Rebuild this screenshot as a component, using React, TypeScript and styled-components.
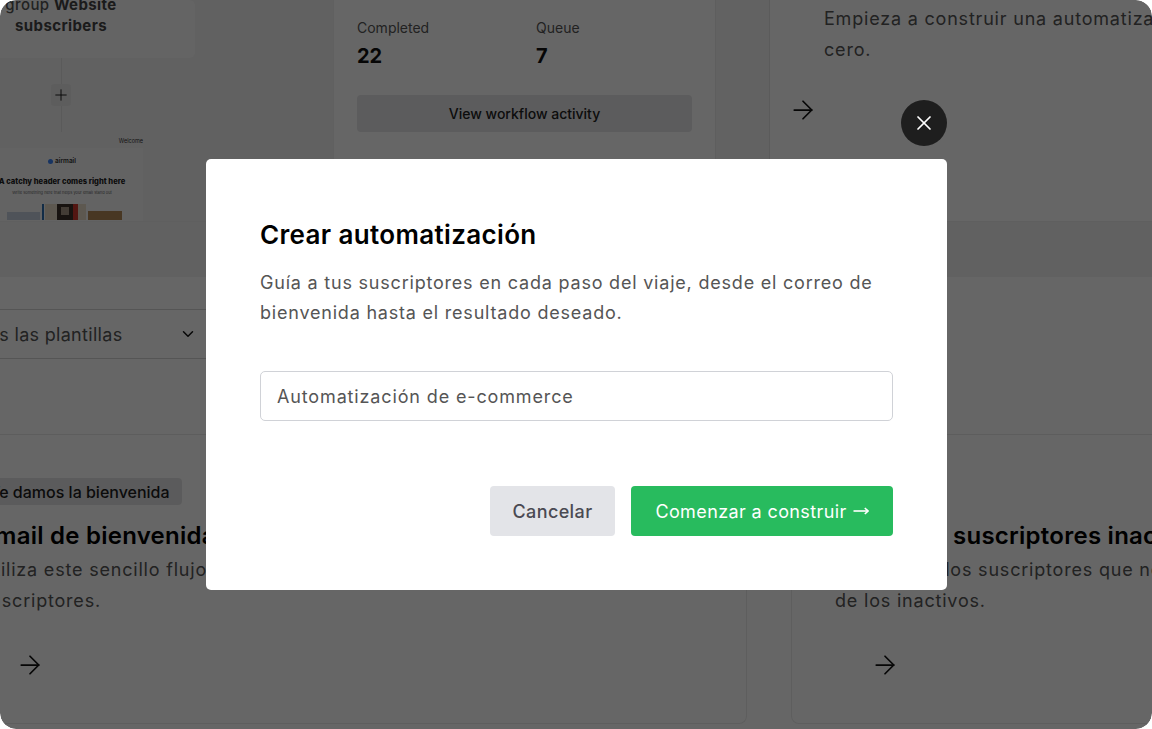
import React from "react";
import styled, { createGlobalStyle } from "styled-components";
import { ArrowRight, ChevronDown, Plus, X } from "lucide-react";

const Global = createGlobalStyle`
  html, body { margin: 0; padding: 0; background: #fff; }
  body { font-family: Inter, "Liberation Sans", sans-serif; }
  * { box-sizing: border-box; }
`;

const Frame = styled.div`
  position: relative;
  width: 1152px;
  height: 729px;
  border-radius: 16px;
  overflow: hidden;
  background: #fff;
`;

const Page = styled.div`
  display: flex;
  flex-direction: column;
  height: 100%;
`;

const TopRow = styled.section`
  display: flex;
  height: 221px;
  flex: none;
`;

const CanvasCol = styled.div`
  width: 333px;
  flex: none;
  background: #f3f3f3;
  display: flex;
  flex-direction: column;
`;

const NodeCard = styled.div`
  width: 268px;
  height: 58px;
  margin-left: -73px;
  padding-bottom: 22px;
  background: #fbfbfb;
  border-radius: 6px;
  display: flex;
  align-items: flex-end;
  justify-content: center;
  text-align: center;
  font-size: 15px;
  line-height: 21px;
  letter-spacing: 0.4px;
  font-weight: 500;
  color: #555;
  b { font-weight: 700; color: #444; }
`;

const Connector = styled.div`
  width: 268px;
  height: 74px;
  margin-left: -73px;
  display: flex;
  flex-direction: column;
  align-items: center;
`;

const Stem = styled.div`
  width: 1px;
  flex: 1;
  background: #e2e2e2;
`;

const PlusBox = styled.div`
  width: 20px;
  height: 22px;
  background: #e9e9e9;
  border-radius: 3px;
  display: flex;
  align-items: center;
  justify-content: center;
  color: #111;
`;

const EmailWrap = styled.div`
  width: 153px;
  margin-left: -10px;
  flex: 1;
  display: flex;
  flex-direction: column;
  align-items: flex-end;
`;

const Caption = styled.div`
  font-size: 5.5px;
  line-height: 8px;
  margin-top: 5px;
  height: 11px;
  color: #333;
`;

const EmailCard = styled.div`
  width: 100%;
  flex: 1;
  background: #f8f8f8;
  padding: 9px 9px 0 0;
  display: flex;
  flex-direction: column;
  align-items: center;
  overflow: hidden;
`;

const Brand = styled.div`
  display: flex;
  align-items: center;
  gap: 2px;
  font-size: 6.5px;
  line-height: 8px;
  font-weight: 600;
  color: #333;
`;

const BrandDot = styled.span`
  width: 5px;
  height: 5px;
  border-radius: 50%;
  background: #3b82f6;
`;

const EmailHeader = styled.div`
  margin-top: 12px;
  font-size: 7.6px;
  line-height: 10px;
  font-weight: 800;
  color: #222;
  white-space: nowrap;
`;

const EmailSub = styled.div`
  margin-top: 3px;
  font-size: 4px;
  line-height: 6px;
  color: #666;
  white-space: nowrap;
`;

const Collage = styled.svg`
  margin-top: 8px;
  flex: none;
`;

const StatsCol = styled.div`
  width: 383px;
  flex: none;
  background: #fff;
  padding: 0 23px;
  border-left: 1px solid #f0f0f0;
  border-right: 1px solid #ececec;
`;

const Stats = styled.div`
  display: grid;
  grid-template-columns: 179px 1fr;
  padding-top: 19px;
`;

const StatLabel = styled.div`
  font-size: 14px;
  line-height: 18px;
  color: #555;
`;

const StatValue = styled.div`
  font-size: 20px;
  line-height: 24px;
  font-weight: 700;
  margin-top: 7px;
  color: #111;
`;

const ActivityButton = styled.div`
  margin-top: 27px;
  height: 37px;
  border-radius: 4px;
  background: #e6e6e8;
  display: flex;
  align-items: center;
  justify-content: center;
  font-size: 14px;
  font-weight: 500;
  color: #222;
`;

const Gutter = styled.div`
  width: 53px;
  flex: none;
  background: #f6f6f6;
`;

const StartCol = styled.div`
  flex: 1;
  min-width: 0;
  background: #fff;
  border-left: 1px solid #e4e4e4;
  padding: 3px 0 0 54px;
`;

const Desc = styled.p`
  margin: 0;
  font-size: 18px;
  line-height: 31px;
  letter-spacing: 0.8px;
  color: #555;
  white-space: pre;
`;

const ArrowSlot = styled.div<{ $shift: number; $top: number }>`
  margin-left: ${(p) => p.$shift}px;
  margin-top: ${(p) => p.$top}px;
  height: 30px;
  color: #111;
  svg { display: block; }
`;

const Band = styled.div`
  height: 56px;
  flex: none;
  background: #f2f2f2;
  border-top: 1px solid #eeeeee;
`;

const FilterRow = styled.div`
  height: 158px;
  flex: none;
  padding-top: 32px;
  border-bottom: 1px solid #e8e8e8;
`;

const SelectBox = styled.div`
  width: 275px;
  height: 50px;
  margin-left: -60px;
  padding: 0 8px 0 15px;
  border: 1px solid #d5d5d5;
  border-radius: 4px;
  display: flex;
  align-items: center;
  justify-content: space-between;
  font-size: 18px;
  letter-spacing: 0.3px;
  color: #555;
  white-space: nowrap;
  svg { color: #111; margin-right: 9px; }
`;

const Cards = styled.div`
  flex: 1;
  display: grid;
  grid-template-columns: 811px 811px;
  column-gap: 44px;
  margin-left: -64px;
  padding-bottom: 5px;
`;

const Card = styled.article`
  padding: 43px 43px 0;
  border: 1px solid #eaeaea;
  border-top: 0;
  border-radius: 0 0 8px 8px;
  display: flex;
  flex-direction: column;
  align-items: flex-start;
`;

const Tag = styled.span`
  height: 27px;
  padding: 0 12px 0 10px;
  border-radius: 4px;
  background: #e4e4e6;
  display: inline-flex;
  align-items: center;
  font-size: 16px;
  font-weight: 500;
  color: #1c1c1c;
  white-space: nowrap;
`;

const CardTitle = styled.h3`
  margin: 15px 0 0;
  font-size: 24px;
  line-height: 32px;
  letter-spacing: 0.25px;
  font-weight: 600;
  color: #000;
  white-space: nowrap;
`;

const CardText = styled(Desc)`
  margin-top: 2px;
`;

const Overlay = styled.div`
  position: absolute;
  inset: 0;
  border-radius: 16px;
  background: rgba(0, 0, 0, 0.6);
  backdrop-filter: blur(0.6px);
  display: flex;
  align-items: flex-start;
  justify-content: flex-start;
  padding: 159px 0 0 206px;
`;

const Modal = styled.div`
  position: relative;
  width: 741px;
  height: 431px;
  padding: 60px 54px 54px;
  background: #fff;
  border-radius: 5px;
  display: flex;
  flex-direction: column;
`;

const CloseButton = styled.button`
  position: absolute;
  top: -59px;
  right: 0;
  width: 46px;
  height: 46px;
  padding: 0;
  border: 0;
  border-radius: 50%;
  background: #1e1e1e;
  color: #fff;
  display: flex;
  align-items: center;
  justify-content: center;
`;

const Title = styled.h2`
  margin: 0;
  font-size: 26px;
  line-height: 32px;
  letter-spacing: 0.35px;
  font-weight: 600;
  color: #000;
`;

const Lead = styled.p`
  margin: 17px 0 0;
  font-size: 18px;
  line-height: 30px;
  letter-spacing: 0.79px;
  color: #555;
  white-space: pre;
`;

const NameInput = styled.input`
  margin-top: 43px;
  width: 100%;
  height: 50px;
  padding: 0 16px;
  border: 1px solid #d0d2d7;
  border-radius: 5px;
  outline: none;
  font-family: inherit;
  font-size: 18px;
  letter-spacing: 0.86px;
  color: #555;
`;

const Actions = styled.div`
  margin-top: auto;
  display: flex;
  justify-content: flex-end;
  gap: 16px;
`;

const ActionButton = styled.button<{ $primary?: boolean }>`
  height: 50px;
  width: ${(p) => (p.$primary ? 262 : 125)}px;
  padding: 0;
  border: 0;
  border-radius: 4px;
  display: inline-flex;
  align-items: center;
  justify-content: center;
  gap: 6px;
  font-family: inherit;
  font-size: 18px;
  letter-spacing: 0.38px;
  font-weight: ${(p) => (p.$primary ? 400 : 500)};
  background: ${(p) => (p.$primary ? "#28bb5e" : "#e3e4e8")};
  color: ${(p) => (p.$primary ? "#fff" : "#4a4a52")};
`;

const ButtonArrow = styled.svg`
  flex: none;
`;

export default function App() {
  return (
    <>
      <Global />
      <Frame>
        <Page>
          <TopRow>
            <CanvasCol>
              <NodeCard>
                <div>
                  group <b>Website</b>
                  <br />
                  <b>subscribers</b>
                </div>
              </NodeCard>
              <Connector>
                <Stem />
                <PlusBox>
                  <Plus size={18} strokeWidth={1.25} />
                </PlusBox>
                <Stem />
              </Connector>
              <EmailWrap>
                <Caption>Welcome</Caption>
                <EmailCard>
                  <Brand>
                    <BrandDot />
                    airmail
                  </Brand>
                  <EmailHeader>A catchy header comes right here</EmailHeader>
                  <EmailSub>Write something here that helps your email stand out</EmailSub>
                  <Collage width="125" height="16" viewBox="0 0 125 16">
                    <rect x="7" y="8" width="33" height="8" fill="#c5d0de" />
                    <rect x="42" y="0" width="2" height="16" fill="#2f6fb0" />
                    <rect x="45" y="0" width="12" height="16" fill="#e9dcc8" />
                    <rect x="57" y="0" width="16" height="16" fill="#3d3029" />
                    <rect x="61" y="3" width="8" height="8" fill="#a89684" />
                    <rect x="73" y="0" width="5" height="16" fill="#d0392e" />
                    <rect x="78" y="0" width="8" height="16" fill="#e9dcc8" />
                    <rect x="88" y="7" width="34" height="9" fill="#b58a58" />
                  </Collage>
                </EmailCard>
              </EmailWrap>
            </CanvasCol>
            <StatsCol>
              <Stats>
                <div>
                  <StatLabel>Completed</StatLabel>
                  <StatValue>22</StatValue>
                </div>
                <div>
                  <StatLabel>Queue</StatLabel>
                  <StatValue>7</StatValue>
                </div>
              </Stats>
              <ActivityButton>View workflow activity</ActivityButton>
            </StatsCol>
            <Gutter />
            <StartCol>
              <Desc>{"Empieza a construir una automatización desde\ncero."}</Desc>
              <ArrowSlot $shift={-36} $top={30}>
                <ArrowRight size={30} strokeWidth={1.4} />
              </ArrowSlot>
            </StartCol>
          </TopRow>
          <Band />
          <FilterRow>
            <SelectBox>
              Todas las plantillas
              <ChevronDown size={18} strokeWidth={2} />
            </SelectBox>
          </FilterRow>
          <Cards>
            <Card>
              <Tag>Te damos la bienvenida</Tag>
              <CardTitle>Email de bienvenida</CardTitle>
              <CardText>{"Utiliza este sencillo flujo para saludar a tus nuevos\nsuscriptores."}</CardText>
              <ArrowSlot $shift={35} $top={34}>
                <ArrowRight size={30} strokeWidth={1.4} />
              </ArrowSlot>
            </Card>
            <Card>
              <Tag>Reactivar</Tag>
              <CardTitle>Reactivar suscriptores inactivos</CardTitle>
              <CardText>{"Recupera a los suscriptores que no abren tus correos\nde los inactivos."}</CardText>
              <ArrowSlot $shift={35} $top={34}>
                <ArrowRight size={30} strokeWidth={1.4} />
              </ArrowSlot>
            </Card>
          </Cards>
        </Page>
        <Overlay>
          <Modal>
            <CloseButton aria-label="Cerrar">
              <X size={24} strokeWidth={1.75} />
            </CloseButton>
            <Title>Crear automatización</Title>
            <Lead>
              {"Guía a tus suscriptores en cada paso del viaje, desde el correo de\nbienvenida hasta el resultado deseado."}
            </Lead>
            <NameInput defaultValue="Automatización de e-commerce" />
            <Actions>
              <ActionButton>Cancelar</ActionButton>
              <ActionButton $primary>
                Comenzar a construir
                <ButtonArrow width="16" height="10" viewBox="0 0 16 10" fill="none" stroke="#fff" strokeWidth="1.6">
                  <path d="M0.5 5H15" />
                  <path d="M11.8 2L15 5L11.8 8" />
                </ButtonArrow>
              </ActionButton>
            </Actions>
          </Modal>
        </Overlay>
      </Frame>
    </>
  );
}
